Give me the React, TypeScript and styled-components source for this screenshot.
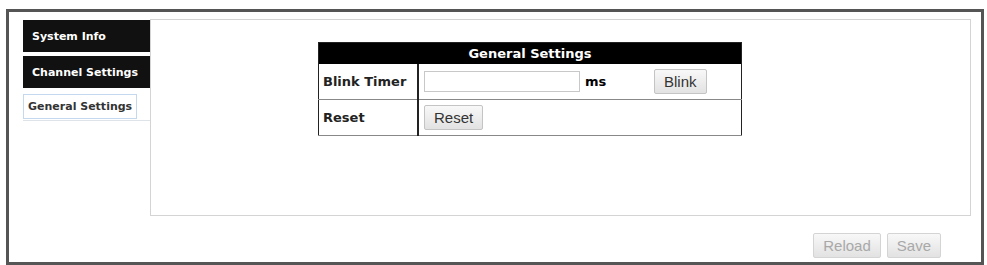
import styled, { createGlobalStyle } from "styled-components"

const Global = createGlobalStyle`
body { margin: 0; background: #fff; font-family: "DejaVu Sans", Verdana, sans-serif; }
`

const Frame = styled.div`
margin: 9px 3px 0 6px;
height: 256px;
box-sizing: border-box;
border: 3px solid #555;
padding: 7px 10px 0 14px;
display: flex;
flex-direction: column;
`
const Row = styled.div`
display: flex;
align-items: flex-start;
`
const Tabs = styled.div`
width: 127px;
padding-top: 1px;
display: flex;
flex-direction: column;
gap: 4px;
`
const Tab = styled.div<{ active?: boolean }>`
height: ${({ active }) => (active ? "29px" : "32px")};
box-sizing: border-box;
background: ${({ active }) => (active ? "#fff" : "#111")};
color: ${({ active }) => (active ? "#333" : "#fff")};
font-size: 11px;
font-weight: bold;
display: flex;
align-items: center;
padding-left: ${({ active }) => (active ? "0" : "9px")};
border-bottom: ${({ active }) => (active ? "1px solid #dde3e8" : "none")};
`
const TabLabel = styled.span`
display: flex;
align-items: center;
width: 114px;
height: 25px;
box-sizing: border-box;
border: 1px solid #c4d8ee;
padding-left: 4px;
`
const Panel = styled.div`
flex: 1;
height: 197px;
box-sizing: border-box;
border: 1px solid #d4d4d4;
padding: 22px 0 0 167px;
`
const Grid = styled.table`
border-collapse: collapse;
width: 424px;
border: 1px solid #222;
font-size: 13px;
`
const Head = styled.th`
background: #000;
color: #fff;
font-weight: bold;
height: 21px;
padding: 0;
text-align: center;
`
const Label = styled.td`
width: 94px;
height: 35px;
padding: 0 0 0 4px;
font-weight: bold;
color: #222;
border-right: 2px solid #222;
border-bottom: 1px solid #888;
`
const Cell = styled.td`
padding: 0 0 0 5px;
border-bottom: 1px solid #888;
`
const Line = styled.div`
display: flex;
align-items: center;
`
const Field = styled.input`
width: 156px;
height: 21px;
box-sizing: border-box;
border: 1px solid #c8c8c8;
margin: 0;
`
const Unit = styled.span`
font-weight: bold;
margin-left: 5px;
width: 69px;
`
const Btn = styled.button<{ off?: boolean }>`
font-family: "Liberation Sans", Arial, sans-serif;
font-size: 15px;
color: ${({ off }) => (off ? "#a8a8a8" : "#333")};
background: linear-gradient(#f8f8f8, #e2e2e2);
border: 1px solid ${({ off }) => (off ? "#d4d4d4" : "#c4c4c4")};
border-radius: 2px;
height: 25px;
padding: 0 9px;
`
const Footer = styled.div`
display: flex;
justify-content: flex-end;
gap: 6px;
padding: 17px 30px 0 0;
`

const App = () => {
  return (
    <>
      <Global />
      <Frame>
        <Row>
          <Tabs>
            <Tab>System Info</Tab>
            <Tab>Channel Settings</Tab>
            <Tab active>
              <TabLabel>General Settings</TabLabel>
            </Tab>
          </Tabs>
          <Panel>
            <Grid>
              <thead>
                <tr>
                  <Head colSpan={2}>General Settings</Head>
                </tr>
              </thead>
              <tbody>
                <tr>
                  <Label>Blink Timer</Label>
                  <Cell>
                    <Line>
                      <Field />
                      <Unit>ms</Unit>
                      <Btn>Blink</Btn>
                    </Line>
                  </Cell>
                </tr>
                <tr>
                  <Label>Reset</Label>
                  <Cell>
                    <Btn>Reset</Btn>
                  </Cell>
                </tr>
              </tbody>
            </Grid>
          </Panel>
        </Row>
        <Footer>
          <Btn off>Reload</Btn>
          <Btn off>Save</Btn>
        </Footer>
      </Frame>
    </>
  )
}

export default App
